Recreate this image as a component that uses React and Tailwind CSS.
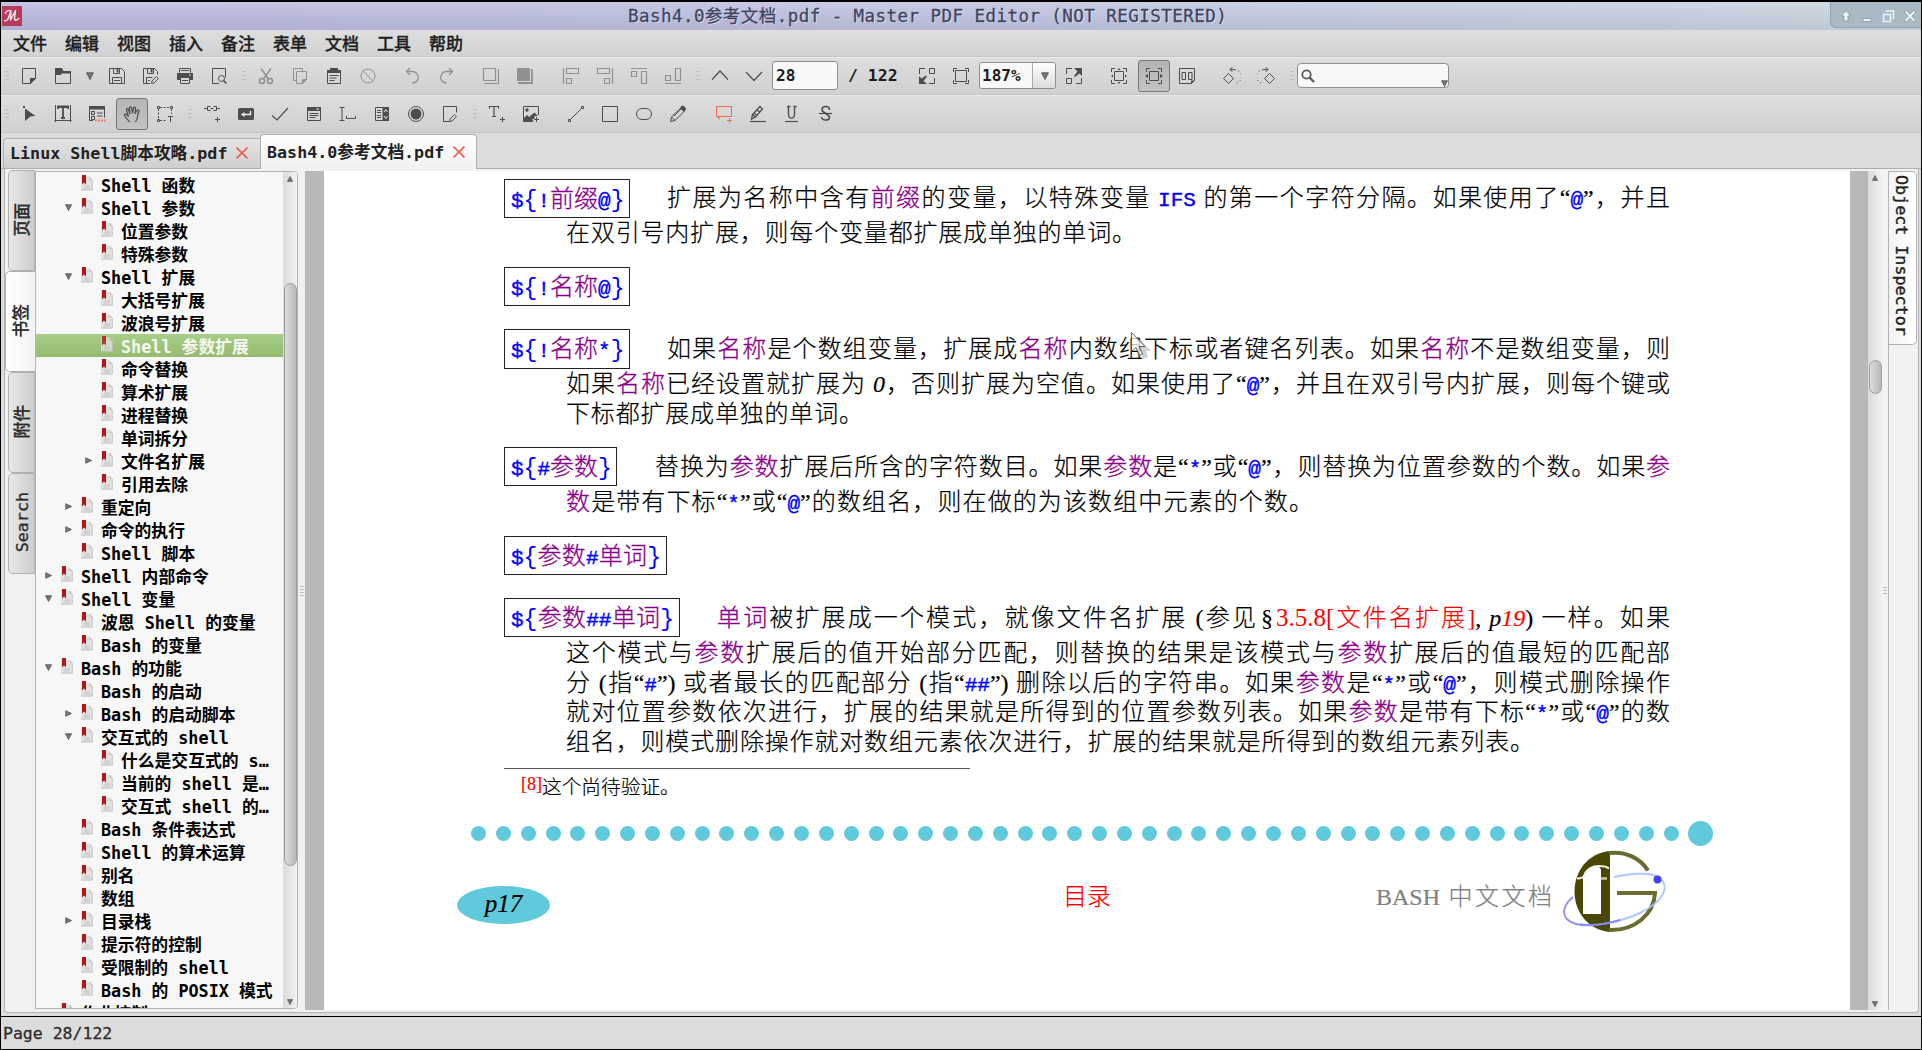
import React from "react";

const UI = "font-['DejaVu_Sans_Mono','Noto_Sans_CJK_SC',monospace]";

/* ---------- toolbar icons (18 x 18 grid) ---------- */

function Ico({ children, dim, color }) {
  return (
    <svg
      width="18"
      height="18"
      viewBox="0 0 18 18"
      fill="none"
      stroke={color || "#4d4d4d"}
      strokeWidth="1"
      className={dim ? "opacity-50" : ""}
    >
      {children}
    </svg>
  );
}

const F = "#4d4d4d";
const pencil = "M9.500 16.500l.5-2.500 4.500-4.500 2 2-4.500 4.500z";

const NewIcon = () => (
  <Ico>
    <path d="M2.5 1.5h13v10l-5 5h-8z" />
    <path d="M10.5 16.5v-5h5z" fill={F} />
  </Ico>
);
const OpenIcon = () => (
  <Ico>
    <path d="M1.5 1.5v15h15v-12h-8l-1.5-3z" />
    <path d="M1 1h7l1.5 3H17v2.5H8L6.5 8H1z" fill={F} stroke="none" />
  </Ico>
);
const SaveIcon = () => (
  <Ico>
    <path d="M1.5 1.5h12l3 3v12h-15z" />
    <path d="M5.500 1.500v5h6v-5M4.500 16.500v-6h9v6M6 13.500h6" />
    <path d="M8.500 2h2v3.500h-2z" fill={F} stroke="none" />
  </Ico>
);
const SaveAsIcon = () => (
  <Ico>
    <path d="M8 16.500H1.500v-15h11l3 3v3" />
    <path d="M5.500 1.500v5h6v-5M4.500 16.500v-6h6M6 13.500h2" />
    <path d="M8.500 2h2v3.500h-2z" fill={F} stroke="none" />
    <path d={pencil} />
  </Ico>
);
const PrintIcon = () => (
  <Ico>
    <path d="M3.500 5.500v-4h11v4M5 3.500h8" />
    <path d="M1 6h16v7h-3v-2.500H4V13H1z" fill={F} stroke="none" />
    <path d="M4.500 10.500h9v6h-9zM6 13.500h6" />
    <path d="M13 8h2" stroke="#ddd" />
  </Ico>
);
const PreviewIcon = () => (
  <Ico>
    <path d="M9 16.500H2.500v-15h13v9" />
    <circle cx="11.500" cy="11.500" r="3" />
    <path d="M13.500 13.500l3 3" strokeWidth="1.500" />
  </Ico>
);
const CutIcon = () => (
  <Ico dim>
    <path d="M4 1.500l7.500 10.500M14 1.500L6.500 12" strokeWidth="1.500" />
    <circle cx="5" cy="14" r="2.500" strokeWidth="1.500" />
    <circle cx="13" cy="14" r="2.500" strokeWidth="1.500" />
  </Ico>
);
const CopyIcon = () => (
  <Ico dim>
    <path d="M5 13.500H2.500v-12h9V4" />
    <path d="M5.500 4.500h10v8l-4 4h-6z" />
    <path d="M11.500 16.500v-4h4z" fill={F} />
  </Ico>
);
const PasteIcon = () => (
  <Ico>
    <path d="M2.500 3.500h13v13h-13z" />
    <path d="M2 3h3V1h8v2h3v3H2z" fill={F} stroke="none" />
    <path d="M4.500 8.500h9M4.500 11h7M4.500 13.500h5" />
  </Ico>
);
const BanIcon = () => (
  <Ico dim>
    <circle cx="9" cy="9" r="7" />
    <path d="M4 4l10 10" />
  </Ico>
);
const UndoIcon = () => (
  <Ico dim>
    <path d="M6 1L2.500 4.500 6 8" strokeWidth="1.300" />
    <path d="M3 4.500h5.500a5.700 5.700 0 0 1 0 11.500" strokeWidth="1.300" />
  </Ico>
);
const RedoIcon = () => (
  <Ico dim>
    <path d="M11 1l3.500 3.500L11 8" strokeWidth="1.300" />
    <path d="M14 4.500H8.500a5.700 5.700 0 0 0 0 11.500" strokeWidth="1.300" />
  </Ico>
);
const FrontIcon = () => (
  <Ico dim>
    <path d="M1.500 1.500h12v12h-12zM2 16.500h14.500V2" strokeWidth="1.200" />
  </Ico>
);
const BackIcon = () => (
  <Ico dim>
    <path d="M1.500 1.500h12v12h-12z" fill={F} />
    <path d="M2 16h14V2" strokeWidth="1.800" />
  </Ico>
);
const AlignL = () => (
  <Ico dim>
    <path d="M1.500 1v16M4.500 1.500h12v5h-12zM4.500 11.500h5v5h-5z" strokeWidth="1.200" />
  </Ico>
);
const AlignR = () => (
  <Ico dim>
    <path d="M16.500 1v16M1.500 1.500h12v5h-12zM8.500 11.500h5v5h-5z" strokeWidth="1.200" />
  </Ico>
);
const AlignT = () => (
  <Ico dim>
    <path d="M1 1.500h16M11.500 4.500h5v12h-5zM1.500 4.500h5v5h-5z" strokeWidth="1.200" />
  </Ico>
);
const AlignB = () => (
  <Ico dim>
    <path d="M1 16.500h16M11.500 1.500h5v12h-5zM1.500 8.500h5v5h-5z" strokeWidth="1.200" />
  </Ico>
);
const UpIcon = () => (
  <Ico>
    <path d="M1 12.500l8-8.500 8 8.500" strokeWidth="1.200" />
  </Ico>
);
const DownIcon = () => (
  <Ico>
    <path d="M1 5l8 8.500L17 5" strokeWidth="1.200" />
  </Ico>
);
const ZoomOutIcon = () => (
  <Ico>
    <path d="M1.500 7V1.500H7M11.500 1.500h5v5h-5zM16.500 11v5.500H11" />
    <path d="M1 9l2.500 2.500L8 8.500l1 1-3.500 4.500L9 17H1z" fill={F} stroke="none" />
  </Ico>
);
const FitIcon = () => (
  <Ico>
    <path d="M3.500 3.500h11v11h-11zM1.500 5V1.500H5M13 1.500h3.500V5M16.500 13v3.500H13M5 16.500H1.500V13" />
  </Ico>
);
const ZoomInIcon = () => (
  <Ico>
    <path d="M1.500 7V1.500H7M1.500 11.500h5v5h-5zM16.500 11v5.500H11" />
    <path d="M17 9l-2.500-2.500L10 10 9 9l3.500-4.500L9 1h8z" fill={F} stroke="none" />
  </Ico>
);
const FitPageIcon = () => (
  <Ico>
    <path d="M4.500 4.500h9v9h-9zM1.500 5V1.500H5M13 1.500h3.500V5M16.500 13v3.500H13M5 16.500H1.500V13" />
    <path d="M9 1l1.500 2h-3zM9 17l1.500-2h-3zM1 9l2-1.500v3zM17 9l-2-1.500v3z" fill={F} stroke="none" />
  </Ico>
);
const FitWidthIcon = () => (
  <Ico>
    <path d="M4.500 4.500h9v9h-9zM1.500 5V1.500H5M13 1.500h3.500V5M16.500 13v3.500H13M5 16.500H1.500V13" />
    <path d="M0 9l3-2v4zM18 9l-3-2v4z" fill={F} stroke="none" />
  </Ico>
);
const ThumbsIcon = () => (
  <Ico>
    <path d="M1.500 1.500h15v12l-3 3h-12zM4 5.500h3.500v7H4zM10.500 5.500H14v7h-3.500z" />
    <path d="M13 17v-3.500h4z" fill={F} stroke="none" />
  </Ico>
);
const RotL = () => (
  <Ico>
    <path d="M5.500 6.500l5 5-5 5-5-5zM9.500 0L7 2.500 9.500 5M7 2.500h5" />
    <path d="M12 3a6.500 6.500 0 0 1 0 13" strokeDasharray="1.200 2.200" />
  </Ico>
);
const RotR = () => (
  <Ico>
    <path d="M12.500 6.500l5 5-5 5-5-5zM8.500 0L11 2.500 8.500 5M11 2.500H6" />
    <path d="M6 3a6.500 6.500 0 0 0 0 13" strokeDasharray="1.200 2.200" />
  </Ico>
);

const SelectIcon = () => (
  <Ico>
    <path d="M5 3.500l10.500 7.500-5 .5L5 16z" fill={F} stroke="none" />
    <path d="M3 1h2v2H3z" fill={F} stroke="none" />
  </Ico>
);
const TextEditIcon = () => (
  <Ico>
    <path d="M1.500 0v17M16.500 0v17M0.500 15.500h17M3 2.500h12" />
    <path d="M4 4V1.500h10V4M9 2v11M7 13h4" strokeWidth="1.800" />
  </Ico>
);
const FormIcon = () => (
  <Ico>
    <path d="M1.500 1.500h15v11M1.500 1.500v14H5" />
    <path d="M1 1h16v3.500H1z" fill={F} stroke="none" />
    <path d="M3.500 6.500h3v3h-3zM9 8h5.500M3.500 11.500h3v3h-3zM9 11h5.500" />
    <path d="M7 15.500h11" stroke="#f4785a" strokeWidth="1.800" strokeDasharray="1.800 1.200" />
  </Ico>
);
const HandIcon = () => (
  <Ico>
    <path
      d="M6.500 17c-1-2-3.500-3.500-5-6.500-.5-1.500 1.500-2 2.500-.5l1.500 1.500L3.500 5c-.3-1.700 1.500-2 2-.5L7 9 6.500 3c0-1.600 2-1.600 2.200 0L9.500 8.500l1-5.500c.4-1.500 2.200-1.200 2 .5L12 9l2-3.500c.8-1.300 2.500-.5 2 1-.7 2-1.500 3.500-1.500 5.500s-1 3.500-2 5"
      strokeWidth="1.200"
    />
  </Ico>
);
const CropIcon = () => (
  <Ico>
    <path d="M4 2.500h10M2.500 4v9M15.500 4v5M4 15.500h6" strokeDasharray="2 1.500" />
    <path d="M1.500 1.500h2v2h-2zM14.500 1.500h2v2h-2zM1.500 14.500h2v2h-2zM12 11.500h5M14.500 11v6" />
  </Ico>
);
const LinkAddIcon = () => (
  <Ico>
    <path d="M1 3.500h3M7.500 1.500h-3v4h3M7.500 3.500h3M10.500 1.500h3v4h-3M14 3.500h3M14.500 12v5M12 14.500h5" />
  </Ico>
);
const ButtonIcon = () => (
  <Ico>
    <rect x="1" y="3" width="16" height="12" rx="1.500" fill={F} stroke="none" />
    <path d="M13.500 6v3.500H6" stroke="#eee" strokeWidth="1.500" />
    <path d="M4 9.500l3.500-2.500v5z" fill="#eee" stroke="none" />
  </Ico>
);
const CheckIcon = () => (
  <Ico>
    <path d="M1 10.500l5 4.500L17 3" strokeWidth="1.200" />
  </Ico>
);
const ListIcon = () => (
  <Ico>
    <path d="M2.500 2.500h13v13h-13zM4.500 8.500h9M4.500 10.500h9M4.500 12.500h6" />
    <path d="M2 2h14v4H2z" fill={F} stroke="none" />
    <path d="M11 3.500h3.500L12.700 5.300z" fill="#ddd" stroke="none" />
  </Ico>
);
const FieldIcon = () => (
  <Ico>
    <path d="M0.500 2.500h5M3 2.500v13M0.500 15.500h5M7.500 11v2.500h9V11" />
  </Ico>
);
const ComboIcon = () => (
  <Ico>
    <path d="M2.500 2.500h13v13h-13zM4 5.500h4M4 7.500h4M4 10.500h4M4 12.500h4" />
    <path d="M9.500 2H16v14H9.500z" fill={F} stroke="none" />
    <path d="M11 7l1.800-2.500L14.500 7M11 11l1.800 2.500 1.700-2.500" stroke="#eee" />
  </Ico>
);
const RadioIcon = () => (
  <Ico>
    <circle cx="9" cy="9" r="7.500" />
    <circle cx="9" cy="9" r="5.500" fill={F} stroke="none" />
  </Ico>
);
const SignIcon = () => (
  <Ico>
    <path d="M15.500 7.500v-6h-13v15h5.500" />
    <path d={pencil} transform="translate(-1 0)" />
  </Ico>
);
const TextAddIcon = () => (
  <Ico>
    <path d="M1.500 3.500v-2h9v2M6 1.500v10M4 11.500h4M14.500 12v5M12 14.500h5" strokeWidth="1.200" />
  </Ico>
);
const ImageAddIcon = () => (
  <Ico>
    <path d="M11 16.500H1.500v-15h15V10" />
    <circle cx="5" cy="5" r="1.700" fill={F} stroke="none" />
    <path d="M2 16v-3l3-3 2 2 5.500-4.500L16 11h-3.500v3H10l1 2z" fill={F} stroke="none" />
    <path d="M14.500 12v5M12 14.500h5" />
  </Ico>
);
const LineIcon = () => (
  <Ico>
    <path d="M3.500 14.500l11-11M1.500 14.500h2v2h-2zM14.500 1.500h2v2h-2z" />
  </Ico>
);
const RectIcon = () => (
  <Ico>
    <path d="M1.500 1.500h15v15h-15z" />
  </Ico>
);
const EllipseIcon = () => (
  <Ico>
    <rect x="1.500" y="3.500" width="15" height="11" rx="5.500" />
  </Ico>
);
const PencilIcon = () => (
  <Ico>
    <path d="M1.500 16.500l1-4.500 9-9 3.500 3.500-9 9zM2.500 12l3.500 3.500M5 11l7-7" />
    <path d="M11.500 3L13 1l2 .5L16.800 4 15 6.500z" fill={F} />
  </Ico>
);
const CommentIcon = () => (
  <Ico color="#f4694a">
    <path d="M1.500 1.500h15v10h-15zM14.500 13v5M12 15.500h5" />
    <path d="M2 11.500h2.500V15z" fill="#f4694a" stroke="none" />
  </Ico>
);
const HighlightIcon = () => (
  <Ico>
    <path d="M2.500 14l1-4.500 7.500-8 2.500 2.500-7 8zM3.500 9.500l3 2.500M5 8l3 2.500M8 4.500l2.500 2.500" strokeWidth="1.300" />
    <path d="M1 16.500h16" strokeWidth="1.200" />
  </Ico>
);
const UnderlineIcon = () => (
  <Ico>
    <path d="M5.500 1.500v7.500c0 5.500 6 5.500 6 0V1.500M4 1.500h3.500M10.500 1.500h3" strokeWidth="1.400" />
    <path d="M2 16.500h13" strokeWidth="1.200" />
  </Ico>
);
const StrikeIcon = () => (
  <Ico>
    <path d="M12.500 5c0-4.500-7.500-4.500-7.500-.5C5 8.500 12.500 8.500 12.500 12.500c0 3.500-7.500 3.500-8-.5" strokeWidth="1.600" />
    <path d="M2 8.500h13" strokeWidth="1.200" />
  </Ico>
);

/* ---------- toolbar building blocks ---------- */

function Cell({ children, on }) {
  if (on)
    return (
      <div className="flex h-8 w-[34px] items-center justify-end">
        <div className="flex h-8 w-8 items-center justify-center rounded-[3px] border border-[#777] bg-gradient-to-b from-[#b4b4b4] to-[#c4c4c4]">
          {children}
        </div>
      </div>
    );
  return <div className="flex h-8 w-[34px] items-center justify-center">{children}</div>;
}

function Grip({ first }) {
  return (
    <div className={first ? "flex w-[11px] flex-col gap-[3px] pl-1" : "flex w-[13px] flex-col gap-[3px] pl-1.5"}>
      <div className="h-px w-1 bg-[#bcbcbc]" />
      <div className="h-px w-1 bg-[#bcbcbc]" />
      <div className="h-px w-1 bg-[#bcbcbc]" />
    </div>
  );
}

function Tri({ dir = "down", size = 8 }) {
  return (
    <svg width={size} height={size} viewBox="0 0 8 8">
      <path
        d={dir === "down" ? "M.5 .8h7L4 7.500z" : dir === "up" ? "M.5 7.200h7L4 .5z" : "M.8 .8v6.400L7.500 4z"}
        fill="#777"
        stroke="#4a4a4a"
        strokeWidth=".8"
      />
    </svg>
  );
}

const barRow =
  "flex h-[38px] shrink-0 items-center border-b border-[#c6c6c6] bg-gradient-to-b from-[#dedede] to-[#d0d0d0] shadow-[inset_0_1px_0_#e9e9e9]";

function TitleBar() {
  return (
    <div className="relative flex h-7 shrink-0 items-center bg-linear-to-r from-[#b9b9df] via-[#bfc3df] to-[#c8d6df]">
      <div className="absolute inset-0 bg-gradient-to-b from-white/15 to-black/5" />
      <div className="relative ml-px flex h-5 w-5 items-center justify-center overflow-hidden bg-[#b53a5c]">
        <svg width="18" height="16" viewBox="0 0 18 16" fill="none" stroke="#f6dfe6" strokeWidth="1.500" strokeLinecap="round" strokeLinejoin="round">
          <path d="M1.500 12.500c2 1 3.500-1 4.500-4L8 3 7.500 12l5-9.500-1 8.500c0 1.800 2 1.500 4.500-.5M2.500 5.500C3 3 5.500 2 8 3" />
        </svg>
      </div>
      <div
        className={`relative ml-[606px] mt-px whitespace-pre text-[17.5px] tracking-[0.45px] text-[#3e4562] [-webkit-text-stroke:0.3px_#3e4562] [text-shadow:1px_1px_0_rgba(255,255,255,0.5)] ${UI}`}
      >
        Bash4.0参考文档.pdf - Master PDF Editor (NOT REGISTERED)
      </div>
      <div className="relative ml-auto flex h-[26px] w-[91px] items-center justify-between self-start rounded-bl-md border-b border-l border-[#8fa2ad] bg-[#a9bac4] pl-[9px] pr-[5px] pt-0.5">
        <svg width="12" height="14" viewBox="0 0 12 14" fill="#e9f1f5" stroke="#7e919c" strokeWidth=".7">
          <path d="M6 1.500l4.500 5.500H8v5H4V7H1.500z" />
        </svg>
        <svg width="12" height="14" viewBox="0 0 12 14" fill="#e9f1f5" stroke="#7e919c" strokeWidth=".7">
          <path d="M2 9.500h8v3H2z" />
        </svg>
        <svg width="13" height="14" viewBox="0 0 13 14" fill="none" stroke="#e9f1f5" strokeWidth="1.600">
          <path d="M1.500 5.500h7v7h-7z" />
          <path d="M4.500 3V2h7v7.500h-1" />
        </svg>
        <svg width="12" height="14" viewBox="0 0 12 14" fill="none" strokeLinecap="round">
          <path d="M2 3l8 8.500M10 3l-8 8.500" stroke="#7e919c" strokeWidth="3.200" />
          <path d="M2 3l8 8.500M10 3l-8 8.500" stroke="#eef5f8" strokeWidth="2" />
        </svg>
      </div>
    </div>
  );
}

const menus = ["文件", "编辑", "视图", "插入", "备注", "表单", "文档", "工具", "帮助"];

function MenuBar() {
  return (
    <div className="flex h-[27px] shrink-0 items-center gap-[18px] border-b border-[#c6c6c6] bg-gradient-to-b from-[#dedede] to-[#d2d2d2] pl-3 pt-[3px]">
      {menus.map((m) => (
        <span key={m} className={`w-[34px] whitespace-nowrap text-[17px] font-medium leading-none text-[#1e1e1e] [-webkit-text-stroke:0.3px_#1e1e1e] ${UI}`}>
          {m}
        </span>
      ))}
    </div>
  );
}

function MainToolbar() {
  return (
    <div className={barRow}>
      <Grip first />
      <Cell><NewIcon /></Cell>
      <Cell><OpenIcon /></Cell>
      <div className="flex w-5 justify-center"><Tri /></div>
      <Cell><SaveIcon /></Cell>
      <Cell><SaveAsIcon /></Cell>
      <Cell><PrintIcon /></Cell>
      <Cell><PreviewIcon /></Cell>
      <Grip />
      <Cell><CutIcon /></Cell>
      <Cell><CopyIcon /></Cell>
      <Cell><PasteIcon /></Cell>
      <Cell><BanIcon /></Cell>
      <div className="w-[11px]" />
      <Cell><UndoIcon /></Cell>
      <Cell><RedoIcon /></Cell>
      <div className="w-2.5" />
      <Cell><FrontIcon /></Cell>
      <Cell><BackIcon /></Cell>
      <div className="w-3" />
      <Cell><AlignL /></Cell>
      <Cell><AlignR /></Cell>
      <Cell><AlignT /></Cell>
      <Cell><AlignB /></Cell>
      <Grip />
      <Cell><UpIcon /></Cell>
      <Cell><DownIcon /></Cell>
      <div className={`ml-px flex h-[29px] w-[66px] items-center rounded-[3px] border border-[#8e8e8e] bg-[#f8f8f8] pl-[3px] pt-px text-[16px] font-bold text-[#1c1c1c] ${UI}`}>
        28
      </div>
      <div className={`w-[72px] whitespace-pre pl-[10px] pt-px text-[16.5px] font-bold text-[#1c1c1c] ${UI}`}>/ 122</div>
      <Cell><ZoomOutIcon /></Cell>
      <Cell><FitIcon /></Cell>
      <div className="ml-px flex h-[27px] w-[77px] overflow-hidden rounded-[3px] border border-[#8e8e8e]">
        <div className={`flex w-[53px] items-center border-r border-[#aaa] bg-[#f8f8f8] pl-[2px] pt-px text-[16px] font-bold text-[#1c1c1c] ${UI}`}>
          187%
        </div>
        <div className="flex flex-1 items-center justify-center bg-gradient-to-b from-white to-[#dcdcdc] pl-0.5">
          <Tri />
        </div>
      </div>
      <div className="w-px" />
      <Cell><ZoomInIcon /></Cell>
      <div className="w-[11px]" />
      <Cell><FitPageIcon /></Cell>
      <Cell on><FitWidthIcon /></Cell>
      <Cell><ThumbsIcon /></Cell>
      <div className="w-[11px]" />
      <Cell><RotL /></Cell>
      <Cell><RotR /></Cell>
      <div className="ml-px"><Grip /></div>
      <div className="flex h-[25px] w-[152px] items-center justify-between rounded-sm border border-[#8e8e8e] bg-[#f8f8f8] pl-[3px]">
        <svg width="14" height="14" viewBox="0 0 14 14" fill="none" stroke="#5a5a5a" strokeWidth="1.800">
          <circle cx="5.500" cy="5.500" r="4.200" />
          <path d="M8.500 8.500l4.500 4.500" strokeWidth="2.400" />
        </svg>
        <div className="self-end"><Tri size={7} /></div>
      </div>
    </div>
  );
}

function ToolsToolbar() {
  return (
    <div className={barRow}>
      <Grip first />
      <Cell><SelectIcon /></Cell>
      <Cell><TextEditIcon /></Cell>
      <Cell><FormIcon /></Cell>
      <Cell on><HandIcon /></Cell>
      <Cell><CropIcon /></Cell>
      <Grip />
      <Cell><LinkAddIcon /></Cell>
      <Cell><ButtonIcon /></Cell>
      <Cell><CheckIcon /></Cell>
      <Cell><ListIcon /></Cell>
      <Cell><FieldIcon /></Cell>
      <Cell><ComboIcon /></Cell>
      <Cell><RadioIcon /></Cell>
      <Cell><SignIcon /></Cell>
      <Grip />
      <Cell><TextAddIcon /></Cell>
      <Cell><ImageAddIcon /></Cell>
      <div className="w-[11px]" />
      <Cell><LineIcon /></Cell>
      <Cell><RectIcon /></Cell>
      <Cell><EllipseIcon /></Cell>
      <Cell><PencilIcon /></Cell>
      <div className="w-3" />
      <Cell><CommentIcon /></Cell>
      <Cell><HighlightIcon /></Cell>
      <Cell><UnderlineIcon /></Cell>
      <Cell><StrikeIcon /></Cell>
    </div>
  );
}

function CloseX() {
  return (
    <svg width="12" height="12" viewBox="0 0 12 12" stroke="#e8604c" strokeWidth="1.600" className="shrink-0">
      <path d="M.5 .5l11 11M11.500 .5l-11 11" />
    </svg>
  );
}

function FileTabs() {
  return (
    <div className="flex h-9 shrink-0 items-end border-b border-[#adadad] bg-[#dcdcdc] pl-[2px]">
      <div className={`flex h-[30px] w-[257px] items-center justify-between rounded-tl-[4px] border-l border-t border-[#b0b0b0] bg-gradient-to-b from-[#e4e4e4] to-[#cfcfcf] pb-px pl-[6px] pr-[12px] text-[16.7px] font-bold text-[#222] ${UI}`}>
        <span className="whitespace-pre pt-0.5">Linux Shell脚本攻略.pdf</span>
        <CloseX />
      </div>
      <div className={`-mb-px flex h-[35px] w-[217px] items-center justify-between rounded-t-[4px] border border-b-0 border-[#b0b0b0] bg-gradient-to-b from-white to-[#f1f1f1] pl-[6px] pr-[11px] text-[16.7px] font-bold text-[#222] ${UI}`}>
        <span className="whitespace-pre pt-0.5">Bash4.0参考文档.pdf</span>
        <CloseX />
      </div>
    </div>
  );
}

/* ---------- bookmark panel ---------- */

const sideTabs = ["页面", "书签", "附件", "Search"];

function SideTabs() {
  return (
    <div className="flex w-[30px] shrink-0 flex-col pt-px">
      {sideTabs.map((t) => {
        const active = t === "书签";
        return (
          <div
            key={t}
            className={
              active
                ? "flex h-[101px] w-[30px] items-center justify-center rounded-l-[5px] border border-r-0 border-[#b0b0b0] bg-gradient-to-r from-white to-[#f3f3f3] pb-0.5 pl-0.5"
                : "ml-[3px] flex h-[101px] w-[27px] items-center justify-center rounded-l-[5px] border border-[#b0b0b0] bg-gradient-to-r from-[#e8e8e8] to-[#cdcdcd] pb-0.5 pl-0.5"
            }
          >
            <span className={`rotate-180 text-[16.7px] font-medium text-[#2a2a2a] [-webkit-text-stroke:0.3px_#2a2a2a] [text-orientation:sideways] [writing-mode:vertical-rl] ${UI}`}>
              {t}
            </span>
          </div>
        );
      })}
    </div>
  );
}

// [level, state, label, selected]; state: "o" open, "c" closed, "" leaf
const tree = [
  [1, "", "Shell 函数"],
  [1, "o", "Shell 参数"],
  [2, "", "位置参数"],
  [2, "", "特殊参数"],
  [1, "o", "Shell 扩展"],
  [2, "", "大括号扩展"],
  [2, "", "波浪号扩展"],
  [2, "", "Shell 参数扩展", true],
  [2, "", "命令替换"],
  [2, "", "算术扩展"],
  [2, "", "进程替换"],
  [2, "", "单词拆分"],
  [2, "c", "文件名扩展"],
  [2, "", "引用去除"],
  [1, "c", "重定向"],
  [1, "c", "命令的执行"],
  [1, "", "Shell 脚本"],
  [0, "c", "Shell 内部命令"],
  [0, "o", "Shell 变量"],
  [1, "", "波恩 Shell 的变量"],
  [1, "", "Bash 的变量"],
  [0, "o", "Bash 的功能"],
  [1, "", "Bash 的启动"],
  [1, "c", "Bash 的启动脚本"],
  [1, "o", "交互式的 shell"],
  [2, "", "什么是交互式的 s…"],
  [2, "", "当前的 shell 是…"],
  [2, "", "交互式 shell 的…"],
  [1, "", "Bash 条件表达式"],
  [1, "", "Shell 的算术运算"],
  [1, "", "别名"],
  [1, "", "数组"],
  [1, "c", "目录栈"],
  [1, "", "提示符的控制"],
  [1, "", "受限制的 shell"],
  [1, "", "Bash 的 POSIX 模式"],
  [0, "", "作业控制"],
];

function Mark({ faded }) {
  return (
    <svg width="14" height="18" viewBox="0 0 14 18" className={faded ? "shrink-0 opacity-80" : "shrink-0"}>
      <path d="M1 2.500h8.500L12.500 6v10.500H1z" fill="#e2e2e2" />
      <path d="M9.500 2.500L12.500 6h-3z" fill="#c4c4c4" />
      <path d="M1 16h11.500M4 12h6M4 14h6M12.300 6v10" stroke="#bcbcbc" strokeWidth=".8" />
      <path d="M2 1h4v9.500L4 8.500l-2 2z" fill="#b01818" />
    </svg>
  );
}

const indent = ["pl-[5px]", "pl-[25px]", "pl-[45px]"];

function Tree() {
  return (
    <div className="flex h-[838px] w-[263px] shrink-0 overflow-hidden rounded-r-[4px] border border-[#b4b4b4] bg-[#f7f7f7]">
      <div className="w-[247px] overflow-hidden pt-px">
        {tree.map(([lv, st, label, sel]) => (
          <div
            key={label}
            className={`flex h-[23px] items-center ${indent[lv]} ${
              sel ? "bg-gradient-to-b from-[#a8cd88] to-[#94bb70] text-[#f4f8ee]" : "text-black"
            }`}
          >
            <div className="flex w-[14px] justify-center">
              {st === "o" && <Tri size={7} />}
              {st === "c" && <Tri dir="right" size={7} />}
            </div>
            <div className="-mt-1 ml-[5px] flex"><Mark faded={sel} /></div>
            <span className={`ml-[7px] mt-[3px] whitespace-pre text-[16.8px] font-bold leading-[23px] ${UI}`}>{label}</span>
          </div>
        ))}
      </div>
      <ScrollBar thumb="mt-[97px] h-[583px]" />
    </div>
  );
}

function ScrollBar({ thumb }) {
  return (
    <div className="flex w-[14px] shrink-0 flex-col items-center justify-between bg-gradient-to-r from-[#dadada] to-[#f2f2f2]">
      <div className="flex flex-col items-center">
        <div className="flex h-[14px] items-center"><Tri dir="up" size={6} /></div>
        <div className={`w-[13px] rounded-full border border-[#9c9c9c] bg-gradient-to-r from-[#dcdcdc] to-[#b9b9b9] ${thumb}`} />
      </div>
      <div className="flex h-[14px] items-center pt-0.5"><Tri size={6} /></div>
    </div>
  );
}

/* ---------- document ---------- */

const V = ({ children }) => (
  <span className="text-[#8b008b] [-webkit-text-stroke:0.3px_#8b008b]">{children}</span>
);
const C = ({ children }) => (
  <span className="font-['Liberation_Mono','DejaVu_Sans_Mono',monospace] text-[21px] font-normal leading-none text-[#0000ff] [-webkit-text-stroke:0.4px_#0000ff]">
    {children}
  </span>
);
const Brace = ({ children }) => (
  <span className="font-['Liberation_Mono','DejaVu_Sans_Mono',monospace] text-[23px] font-normal leading-none text-[#0000ff] [-webkit-text-stroke:0]">{children}</span>
);

function Boxed({ children, w }) {
  return (
    <div className={`flex h-full shrink-0 items-center whitespace-nowrap border border-[#222] pl-[6px] pr-[5px] pt-[2px] ${w}`}>
      <div className="w-full [text-align-last:justify]">{children}</div>
    </div>
  );
}

function Line({ children, className }) {
  return (
    <div className={`flex items-center ${className}`}>
      <div className="w-full whitespace-nowrap [text-align-last:justify]">{children}</div>
    </div>
  );
}

function Logo() {
  return (
    <svg width="112" height="90" viewBox="0 0 112 90" fill="none">
      <path d="M48 4C26 6 12.500 24 12.500 44.500S26 83 48 85z" fill="#4a4706" />
      <path d="M47 6c17-2 31 5 39 17.500" stroke="#6b6a30" strokeWidth="4" />
      <path d="M55 46h38c-1 21-20 38-46 37" stroke="#6b6a30" strokeWidth="4" />
      <path d="M21 67V31c0-7 6-12 13-12 3 0 5 2 5 5v43z" fill="#fff" />
      <path d="M15 31.500c4 0 7-1 8-4 3-6 8-9 15-8.500 4 0 7 1 9 2.500" stroke="#f4f4ec" strokeWidth="2" />
      <path d="M39 31.500h6" stroke="#c9c8a8" strokeWidth="2.500" />
      <path d="M52 30C66 27 89 24 98 31c10 9 4 23-20 35-22 10-47 14-60 11" stroke="#a4c4fa" strokeWidth="2" opacity=".9" />
      <path d="M11 50C2 57-1 67 6 73c9 8 32 6 52 0" stroke="#8480f0" strokeWidth="2" opacity=".85" />
      <circle cx="95.500" cy="32.500" r="4" fill="#4444ee" />
    </svg>
  );
}

function Document() {
  return (
    <div className="relative flex h-[839px] w-[1563px] shrink-0 bg-[#b8b8b8] pl-[19px]">
      <div className="flex w-[1526px] flex-col overflow-hidden bg-white pl-[180px] pt-2 font-['Liberation_Serif','Noto_Sans_CJK_SC',serif] text-[24px] font-light leading-none text-black [-webkit-text-stroke:0.2px]">
        <div className="flex h-[39px] w-[1166px] shrink-0 items-center justify-between">
          <Boxed w="w-[126px]"><C>$</C><Brace>{"{"}</Brace><C>!</C><V>前缀</V><C>@</C><Brace>{"}"}</Brace></Boxed>
          <Line className="w-[1003px]">扩展为名称中含有<V>前缀</V>的变量，以特殊变量 <C>IFS</C> 的第一个字符分隔。如果使用了“<C>@</C>”，并且</Line>
        </div>
        <Line className="ml-[62px] h-7 w-[570px] shrink-0 pt-px">在双引号内扩展，则每个变量都扩展成单独的单词。</Line>

        <div className="mt-[21px] h-[39px] shrink-0">
          <Boxed w="w-[126px]"><C>$</C><Brace>{"{"}</Brace><C>!</C><V>名称</V><C>@</C><Brace>{"}"}</Brace></Boxed>
        </div>

        <div className="mt-[23px] flex h-10 w-[1166px] shrink-0 items-center justify-between">
          <Boxed w="w-[126px]"><C>$</C><Brace>{"{"}</Brace><C>!</C><V>名称</V><C>*</C><Brace>{"}"}</Brace></Boxed>
          <Line className="w-[1003px]">如果<V>名称</V>是个数组变量，扩展成<V>名称</V>内数组下标或者键名列表。如果<V>名称</V>不是数组变量，则</Line>
        </div>
        <Line className="ml-[62px] h-[29px] w-[1104px] shrink-0 pt-px">如果<V>名称</V>已经设置就扩展为 <i>0</i>，否则扩展为空值。如果使用了“<C>@</C>”，并且在双引号内扩展，则每个键或</Line>
        <Line className="ml-[62px] h-[31px] w-[297px] shrink-0">下标都扩展成单独的单词。</Line>

        <div className="mt-[18px] flex h-[39px] w-[1166px] shrink-0 items-center justify-between">
          <Boxed w="w-[113px]"><C>$</C><Brace>{"{"}</Brace><C>#</C><V>参数</V><Brace>{"}"}</Brace></Boxed>
          <Line className="w-[1015px] pt-0.5">替换为<V>参数</V>扩展后所含的字符数目。如果<V>参数</V>是“<C>*</C>”或“<C>@</C>”，则替换为位置参数的个数。如果<V>参</V></Line>
        </div>
        <Line className="ml-[62px] h-[30px] w-[747px] shrink-0 pt-0.5"><V>数</V>是带有下标“<C>*</C>”或“<C>@</C>”的数组名，则在做的为该数组中元素的个数。</Line>

        <div className="mt-5 h-[39px] shrink-0">
          <Boxed w="w-[163px]"><C>$</C><Brace>{"{"}</Brace><V>参数</V><C>#</C><V>单词</V><Brace>{"}"}</Brace></Boxed>
        </div>

        <div className="mt-[23px] flex h-[39px] w-[1166px] shrink-0 items-center justify-between">
          <Boxed w="w-[176px]"><C>$</C><Brace>{"{"}</Brace><V>参数</V><C>##</C><V>单词</V><Brace>{"}"}</Brace></Boxed>
          <Line className="w-[953px]"><V>单词</V>被扩展成一个模式，就像文件名扩展 (参见<span className="px-[3px] [-webkit-text-stroke:0]">§</span><span className="text-[#ff0000]"><span className="text-[25px] [-webkit-text-stroke:0]">3.5.8[</span>文件名扩展<span className="[-webkit-text-stroke:0]">]</span></span>, <i>p<span className="text-[#ff0000]">19</span></i>) 一样。如果</Line>
        </div>
        <Line className="ml-[62px] h-[30px] w-[1104px] shrink-0 pt-px">这个模式与<V>参数</V>扩展后的值开始部分匹配，则替换的结果是该模式与<V>参数</V>扩展后的值最短的匹配部</Line>
        <Line className="ml-[62px] h-[30px] w-[1104px] shrink-0 pt-0.5">分 (指“<C>#</C>”) 或者最长的匹配部分 (指“<C>##</C>”) 删除以后的字符串。如果<V>参数</V>是“<C>*</C>”或“<C>@</C>”，则模式删除操作</Line>
        <Line className="ml-[62px] h-[30px] w-[1104px] shrink-0 pt-px">就对位置参数依次进行，扩展的结果就是所得到的位置参数列表。如果<V>参数</V>是带有下标“<C>*</C>”或“<C>@</C>”的数</Line>
        <Line className="ml-[62px] h-[29px] w-[968px] shrink-0">组名，则模式删除操作就对数组元素依次进行，扩展的结果就是所得到的数组元素列表。</Line>

        <div className="mt-3 h-px w-[466px] shrink-0 bg-[#555]" />
        <div className="ml-[17px] flex h-[34px] shrink-0 items-center pt-[3px] text-[19.7px]">
          <span className="mb-2 text-[18px] text-[#ff0000]">[8]</span>这个尚待验证。
        </div>

        <div className="-ml-[33px] mt-[18px] flex h-[25px] w-[1243px] shrink-0 items-center justify-between">
          {Array.from({ length: 49 }, (_, i) => (
            <div key={i} className="h-[15px] w-[15px] rounded-full bg-[#61c9dc]" />
          ))}
          <div className="h-[25px] w-[25px] rounded-full bg-[#61c9dc]" />
        </div>

        <div className="-ml-[47px] mt-0.5 flex h-[96px] shrink-0 items-center">
          <div className="mt-[18px] flex h-[38px] w-[93px] items-center justify-center rounded-[50%] bg-[#61c9dc] pb-1 text-[25px] font-normal italic">
            p17
          </div>
          <div className="ml-[513px] mt-0.5 text-[24px] text-[#ff0000]">目录</div>
          <div className="ml-[265px] mt-0.5 w-[176px] whitespace-nowrap text-[#808080] [text-align-last:justify]">BASH 中文文档</div>
          <div className="-mt-2 ml-[10px]"><Logo /></div>
        </div>
      </div>
      <svg width="28" height="30" viewBox="0 0 28 30" className="absolute left-[825px] top-[160px]">
        <path d="M7 5l14 15h-5l2 6-5 2-3-8-3 4z" fill="#777" opacity=".35" />
        <path d="M1.500 1.500v19l4.500-4 3.500 8 3-1.500L9 15.500h6z" fill="#fff" fillOpacity=".75" stroke="#444" strokeWidth=".8" />
      </svg>
    </div>
  );
}

export default function App() {
  return (
    <div className="flex h-[1050px] w-[1922px] flex-col overflow-hidden border-x border-b border-t-2 border-black bg-[#dcdcdc]">
      <TitleBar />
      <MenuBar />
      <MainToolbar />
      <ToolsToolbar />
      <FileTabs />
      <div className="ml-[3px] mr-[2px] flex h-[844px] shrink-0 rounded-b-[4px] border border-t-0 border-[#b4b4b4] bg-[#f1f1f1]">
        <SideTabs />
        <div className="mt-[2px] flex h-[839px]">
          <Tree />
          <div className="flex w-[7px] shrink-0 flex-col items-center justify-center gap-[2px]">
            <div className="h-px w-1 bg-[#bbb]" />
            <div className="h-px w-1 bg-[#bbb]" />
            <div className="h-px w-1 bg-[#bbb]" />
            <div className="h-px w-1 bg-[#bbb]" />
          </div>
          <Document />
          <ScrollBar thumb="mt-[175px] h-[34px]" />
          <div className="flex w-[6px] shrink-0 flex-col items-center justify-center gap-[2px] bg-[#f3f3f3]">
            <div className="h-px w-1 bg-[#bbb]" />
            <div className="h-px w-1 bg-[#bbb]" />
            <div className="h-px w-1 bg-[#bbb]" />
          </div>
          <div className="w-[29px] border-l border-[#b4b4b4]">
            <div className="flex h-[174px] w-[28px] items-start justify-center rounded-r-[5px] border border-l-0 border-[#b0b0b0] bg-gradient-to-r from-[#f3f3f3] to-white pr-[3px] pt-[3px]">
              <span className={`whitespace-pre text-[16.7px] font-medium text-[#222] [-webkit-text-stroke:0.4px_#222] [text-orientation:sideways] [writing-mode:vertical-rl] ${UI}`}>
                Object Inspector
              </span>
            </div>
          </div>
        </div>
      </div>
      <div className="mt-[3px] h-px shrink-0 bg-black" />
      <div className={`flex flex-1 items-center whitespace-pre pl-[2px] pt-0.5 text-[16.5px] text-[#2c2c2c] [-webkit-text-stroke:0.3px_#2c2c2c] ${UI}`}>
        Page 28/122
      </div>
    </div>
  );
}
